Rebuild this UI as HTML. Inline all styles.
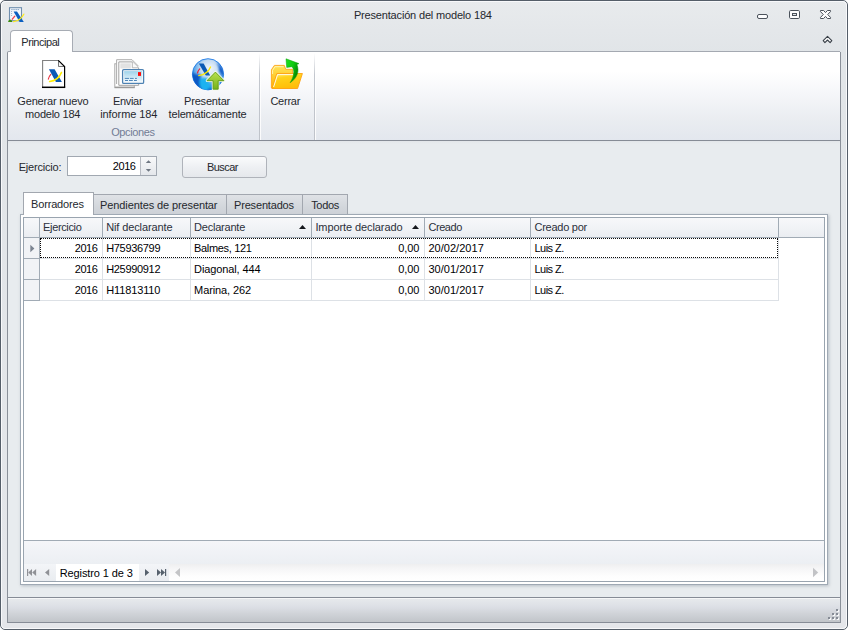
<!DOCTYPE html>
<html>
<head>
<meta charset="utf-8">
<title>Presentación del modelo 184</title>
<style>
html,body{margin:0;padding:0;background:#fff;}
body{width:848px;height:630px;overflow:hidden;position:relative;font-family:"Liberation Sans",sans-serif;font-size:11px;color:#23272e;}
.abs{position:absolute;}
#win{position:absolute;left:0;top:0;width:846px;height:628px;border:1px solid #555e69;border-radius:5px;background:linear-gradient(#e8ebed 0,#e4e7ea 30px,#e1e5e8 51px,#e4e6ea 100%);overflow:hidden;}
#win .hl{position:absolute;left:0;top:0;right:0;bottom:0;border:1px solid #f8f9fb;border-radius:4px;}
.t{position:absolute;white-space:nowrap;line-height:13px;height:13px;transform-origin:0 0;}
.vl{position:absolute;width:1px;}
.hlne{position:absolute;height:1px;}
.tabi{position:absolute;top:194px;height:20px;box-sizing:border-box;border:1px solid #a2a7af;border-left:none;border-bottom:none;background:linear-gradient(#dfe2e6,#d3d7dc 60%,#cdd1d7);}
</style>
</head>
<body>
<div id="win"><div class="hl"></div></div>

<!-- inner frame lines -->
<div class="vl" style="left:7px;top:53px;height:570px;background:#8a9099;"></div>
<div class="vl" style="left:840px;top:52px;height:571px;background:#8a9099;"></div>

<!-- ribbon panel -->
<div class="abs" id="ribbon" style="left:8px;top:52px;width:832px;height:88px;background:linear-gradient(#ffffff 0%,#ffffff 22%,#f5f6f9 48%,#eaedf1 76%,#e3e7ee 100%);"></div>
<div class="hlne" style="left:8px;top:51px;width:832px;background:#a4a9b1;"></div>
<div class="abs" style="left:7px;top:51px;width:2px;height:2px;border-top:1px solid #a4a9b1;border-left:1px solid #8a9099;border-radius:2px 0 0 0;box-sizing:border-box;"></div>
<!-- ribbon tab -->
<div class="abs" id="rtab" style="left:10px;top:30px;width:61px;height:21px;border:1px solid #a7acb4;border-bottom:none;border-radius:4px 4px 0 0;background:#fff;"></div>

<!-- ribbon separators -->
<div class="vl" style="left:259px;top:53px;height:87px;background:linear-gradient(rgba(197,201,208,0),#c3c7ce 25%,#bfc3ca);"></div>
<div class="vl" style="left:260px;top:53px;height:87px;background:linear-gradient(rgba(255,255,255,0),#fff 25%,#fbfbfc);"></div>
<div class="vl" style="left:314px;top:53px;height:87px;background:linear-gradient(rgba(197,201,208,0),#c3c7ce 25%,#bfc3ca);"></div>
<div class="vl" style="left:315px;top:53px;height:87px;background:linear-gradient(rgba(255,255,255,0),#fff 25%,#fbfbfc);"></div>

<!-- content -->
<div class="abs" id="content" style="left:8px;top:140px;width:832px;height:457px;background:linear-gradient(#dfe2e6 0,#e5e9ec 2px,#e8ecef 4px,#e8ecef 100%);"></div>
<div class="hlne" style="left:8px;top:140px;width:832px;background:#868c96;"></div>
<!-- app icon -->
<svg class="abs" style="left:7px;top:6px;" width="18" height="18" viewBox="7 6 18 18">
<rect x="9.5" y="7.7" width="12" height="13" fill="#f4f8fc" stroke="#6f8eae" stroke-width="1.1"/>
<path d="M11.3 9.6 H19.8" stroke="#7a9cc0" stroke-width="1" stroke-dasharray="1.3 0.8"/>
<path d="M11.6 11 V17" stroke="#8aa8c8" stroke-width="0.9" stroke-dasharray="1 1"/>
<path d="M13.6 11.6 H17 L23.8 22 H19.6 Z" fill="#0b5fc0"/>
<path d="M12.3 19.2 L14.8 16.2" stroke="#f0404c" stroke-width="1.3" stroke-linecap="round"/>
<path d="M13.6 21.6 Q20.5 20.6 23.8 14.2" stroke="#ffec1a" stroke-width="1.3" fill="none" stroke-linecap="round"/>
<path d="M8 21.9 Q8.4 19.6 10.2 19.4 Q12 19.6 12.4 21.9 Z" fill="#3c8c10"/>
</svg>

<!-- window buttons -->
<svg class="abs" style="left:755px;top:7px;" width="80" height="15" viewBox="755 7 80 15">
<rect x="757.5" y="14.5" width="10" height="4" rx="1.5" fill="#fdfdfe" stroke="#4b525b" stroke-width="1"/>
<rect x="789.5" y="10.5" width="10" height="8" rx="1.2" fill="#fdfdfe" stroke="#4b525b" stroke-width="1"/>
<rect x="792.5" y="13.5" width="4" height="2" fill="#e4e7eb" stroke="#4b525b" stroke-width="1"/>
<path d="M820.5 10.5 H823.6 L825.5 12.6 L827.4 10.5 H830.5 V11.6 L827.7 14.5 L830.5 17.4 V18.5 H827.4 L825.5 16.4 L823.6 18.5 H820.5 V17.4 L823.3 14.5 L820.5 11.6 Z" fill="#fdfdfe" stroke="#4b525b" stroke-width="1" stroke-linejoin="round"/>
</svg>
<svg class="abs" style="left:820px;top:34px;" width="14" height="11" viewBox="820 34 14 11">
<path d="M827.5 36.3 L831.8 40.6 L830.1 42.6 L827.5 40 L824.9 42.6 L823.2 40.6 Z" fill="#ffffff" stroke="#3a4149" stroke-width="1.1" stroke-linejoin="round"/>
</svg>

<!-- icon 1: generar -->
<svg class="abs" style="left:34px;top:54px;" width="40" height="40" viewBox="0 0 40 40">
<path d="M8.5 6.5 H24.5 L30.5 12.5 V33.2 H8.5 Z" fill="#fff"/>
<path d="M8.6 33.5 V6.5 H24.5" fill="none" stroke="#808080" stroke-width="1.1"/>
<path d="M24.5 6.5 V12.5 H30.5 Z" fill="#f4f4f4" stroke="#555" stroke-width="0.8"/>
<path d="M24.3 6.3 L30.6 12.6 V33.5" fill="none" stroke="#000" stroke-width="1.2"/>
<path d="M8 33.3 H31.2" stroke="#000" stroke-width="1.5"/>
<path d="M14.9 15.2 H20.6 L27.9 27.9 H21.9 Z" fill="#0b5ab5"/>
<path d="M14.3 25.2 Q14.8 22.6 16.8 20.4" stroke="#e8303e" stroke-width="1.1" fill="none" stroke-linecap="round"/>
<path d="M15.6 27.6 Q24.2 26.6 27.5 18.4" stroke="#ffee00" stroke-width="1.5" fill="none" stroke-linecap="round"/>
</svg>

<!-- icon 2: enviar -->
<svg class="abs" style="left:108px;top:54px;" width="40" height="40" viewBox="0 0 40 40">
<defs><linearGradient id="env" x1="0" y1="0" x2="0" y2="1"><stop offset="0" stop-color="#9fd3ea"/><stop offset="1" stop-color="#f2f9fd"/></linearGradient></defs>
<rect x="6.8" y="9.8" width="19.5" height="23.2" fill="#fff" stroke="#a9a9a9" stroke-width="1"/>
<path d="M6.5 33.6 H26.8" stroke="#9a9a9a" stroke-width="1.2"/>
<path d="M8.6 30 V5.7 H24 L30.6 12.3" fill="#fff" stroke="#adadad" stroke-width="1"/>
<path d="M10.8 31.3 V7.9 H24.3 L30.7 14 V31.3 Z" fill="#fff" stroke="#a2a2a2" stroke-width="1"/>
<rect x="12.3" y="9.3" width="10.5" height="5.2" fill="#e2e2e2"/>
<path d="M24.3 8 V13.8 H30.5" fill="#fafafa" stroke="#b0b0b0" stroke-width="0.9"/>
<rect x="14.6" y="15.6" width="21" height="13.8" rx="1.2" fill="#fff" stroke="#4d82b3" stroke-width="1.3"/>
<rect x="16.1" y="17.1" width="18" height="10.8" fill="url(#env)"/>
<rect x="29.6" y="17.7" width="3.8" height="4.6" fill="#b8f0f8"/>
<rect x="30" y="18.1" width="3" height="3.8" fill="#ff0a0a"/>
<path d="M16.8 24.4 H21 M21.9 24.4 H25.7 M27 24.4 H28.9 M17 26.5 H20 M21 26.5 H24.8 M26 26.5 H28.9" stroke="#3d7ab2" stroke-width="0.9"/>
</svg>

<!-- icon 3: presentar -->
<svg class="abs" style="left:188px;top:54px;" width="40" height="40" viewBox="0 0 40 40">
<defs>
<radialGradient id="gl" cx="0.55" cy="0.33" r="0.72"><stop offset="0" stop-color="#f4f8fc"/><stop offset="0.4" stop-color="#c4dbf2"/><stop offset="0.72" stop-color="#4a9fe8"/><stop offset="1" stop-color="#0b62d4"/></radialGradient>
<linearGradient id="ga" x1="0" y1="0" x2="0" y2="1"><stop offset="0" stop-color="#b9e04e"/><stop offset="1" stop-color="#76b21a"/></linearGradient>
<clipPath id="gc"><circle cx="20" cy="20.3" r="15.5"/></clipPath>
<filter id="bl" x="-20%" y="-20%" width="140%" height="140%"><feGaussianBlur stdDeviation="0.9"/></filter>
</defs>
<circle cx="20" cy="20.3" r="15.6" fill="url(#gl)" stroke="#1f7ce6" stroke-width="0.9"/>
<g clip-path="url(#gc)" filter="url(#bl)">
<path d="M3 18 Q8 21.5 13.5 20.5 Q10 27 14 37 L3 37 Z" fill="#0a58c4"/>
<path d="M12 25 Q10 31 15 37 L27 37 Q20 31 20.5 25 Q16 23 12 25 Z" fill="#1cb2f0"/>
<path d="M28 8 Q36 12 36.5 23 Q33 21 31 17 Q31.5 12 28 8 Z" fill="#0e5cc8"/>
<path d="M20 34 Q26 36 32 30 L32 37 L20 37 Z" fill="#0a58c4"/>
</g>
<path d="M10.8 9.5 H15.6 L22.2 21.6 H17.8 Z" fill="#0b5ab5"/>
<path d="M9.5 19 Q10 16.8 11.7 14.9" stroke="#e8283c" stroke-width="1.2" fill="none" stroke-linecap="round"/>
<path d="M10.8 21.6 Q19.5 20.5 22.5 13" stroke="#ffe800" stroke-width="1.3" fill="none" stroke-linecap="round"/>
<path d="M27.4 18.1 L35.9 26.7 H30.2 V35.2 H25.1 V26.7 H19 Z" fill="none" stroke="#f4f9ec" stroke-width="2.6" stroke-linejoin="round" opacity="0.92"/>
<path d="M27.4 18.1 L35.9 26.7 H30.2 V35.2 H25.1 V26.7 H19 Z" fill="url(#ga)" stroke="#5c9c16" stroke-width="0.9" stroke-linejoin="round"/>
</svg>

<!-- icon 4: cerrar -->
<svg class="abs" style="left:266px;top:54px;" width="40" height="40" viewBox="0 0 40 40">
<defs>
<linearGradient id="fb" x1="0" y1="0" x2="0" y2="1"><stop offset="0" stop-color="#ffe45a"/><stop offset="1" stop-color="#ffb300"/></linearGradient>
<linearGradient id="ff" x1="0" y1="0" x2="0.3" y2="1"><stop offset="0" stop-color="#ffee88"/><stop offset="0.35" stop-color="#ffd21a"/><stop offset="1" stop-color="#ffbe0a"/></linearGradient>
<linearGradient id="gr" x1="0" y1="0" x2="1" y2="0.6"><stop offset="0" stop-color="#1fe01f"/><stop offset="0.5" stop-color="#0ecb10"/><stop offset="1" stop-color="#007a00"/></linearGradient>
</defs>
<path d="M5.4 34 V15.8 L8.4 11.4 H18.3 L19.7 15.3 H26.6 V34 Z" fill="url(#fb)" stroke="#ffa41a" stroke-width="0.9" stroke-linejoin="round"/>
<path d="M6.6 20 V16.4 L8.9 12.7 H17.5" fill="none" stroke="#fff6c0" stroke-width="0.9"/>
<path d="M10.8 19.5 H36.4 L31.6 34.5 H6 Z" fill="url(#ff)" stroke="#ffa012" stroke-width="0.9" stroke-linejoin="round"/>
<path d="M7.6 33 L11.6 20.6 H27" fill="none" stroke="#fffbe6" stroke-width="1"/>
<path d="M20 4.8 L33 9.6 L30.9 10.6 C33.6 17 31.4 24.2 24.1 28.7 C28 22.6 29 16.4 26 12.7 L20.7 13.4 Z" fill="url(#gr)" stroke="#0aa00a" stroke-width="0.5" stroke-linejoin="round"/>
</svg>


<!-- search row -->
<div class="abs" id="spin" style="left:67px;top:156px;width:88px;height:18px;border:1px solid #a1a8b1;background:#fff;"></div>
<div class="abs" style="left:140px;top:157px;width:16px;height:18px;background:linear-gradient(#f8f9fa,#e4e7eb);border-left:1px solid #b7bbc2;box-sizing:border-box;"></div>
<svg class="abs" style="left:145px;top:160px;" width="8" height="12" viewBox="0 0 8 12"><path d="M0.8 3 L3.5 0.2 L6.2 3 Z" fill="#6f7782"/><path d="M0.8 9 L3.5 11.8 L6.2 9 Z" fill="#6f7782"/></svg>
<div class="abs" id="btn" style="left:182px;top:156px;width:83px;height:20px;border:1px solid #afb3ba;border-radius:3px;background:linear-gradient(#fafbfc,#eef0f3 50%,#e5e8ec);"></div>

<!-- tab page frame -->
<div class="abs" style="left:20px;top:214px;width:806px;height:369px;border:1px solid #9fa9b4;background:#fff;box-shadow:1px 1px 3px rgba(110,120,135,0.40);"></div>

<!-- tabs -->
<div class="tabi" style="left:94px;width:133px;"></div>
<div class="tabi" style="left:227px;width:76px;"></div>
<div class="tabi" style="left:303px;width:45px;"></div>
<div class="abs" style="left:23px;top:192px;width:71px;height:23px;border:1px solid #a2a7af;border-bottom:none;background:#fff;box-sizing:border-box;"></div>

<!-- grid -->
<div class="abs" id="grid" style="left:23px;top:217px;width:800px;height:363px;border:1px solid #99a4af;background:#fff;"></div>
<div class="abs" style="left:24px;top:218px;width:800px;height:19px;background:linear-gradient(#f7f8fa,#f1f3f6 50%,#eaedf1);"></div>
<div class="hlne" style="left:24px;top:237px;width:800px;background:#a1abb5;"></div>
<div class="vl" style="left:39px;top:218px;height:19px;background:#a1abb5;"></div>
<div class="vl" style="left:102px;top:218px;height:19px;background:#a1abb5;"></div>
<div class="vl" style="left:190px;top:218px;height:19px;background:#a1abb5;"></div>
<div class="vl" style="left:311px;top:218px;height:19px;background:#a1abb5;"></div>
<div class="vl" style="left:424px;top:218px;height:19px;background:#a1abb5;"></div>
<div class="vl" style="left:530px;top:218px;height:19px;background:#a1abb5;"></div>
<div class="vl" style="left:778px;top:218px;height:19px;background:#a1abb5;"></div>
<svg class="abs" style="left:299px;top:225px;" width="7" height="4" viewBox="0 0 7 4"><path d="M0 4 L3.5 0 L7 4 Z" fill="#14171c"/></svg>
<svg class="abs" style="left:412px;top:225px;" width="7" height="4" viewBox="0 0 7 4"><path d="M0 4 L3.5 0 L7 4 Z" fill="#14171c"/></svg>
<div class="abs" style="left:24px;top:238px;width:15px;height:63px;background:#f1f3f6;"></div>
<div class="vl" style="left:39px;top:238px;height:63px;background:#a1abb5;"></div>
<div class="hlne" style="left:24px;top:258px;width:16px;background:#a1abb5;"></div>
<div class="hlne" style="left:40px;top:258px;width:739px;background:#dde1e6;"></div>
<div class="hlne" style="left:24px;top:279px;width:16px;background:#a1abb5;"></div>
<div class="hlne" style="left:40px;top:279px;width:739px;background:#dde1e6;"></div>
<div class="hlne" style="left:24px;top:300px;width:16px;background:#a1abb5;"></div>
<div class="hlne" style="left:40px;top:300px;width:739px;background:#dde1e6;"></div>
<div class="vl" style="left:102px;top:238px;height:63px;background:#dde1e6;"></div>
<div class="vl" style="left:190px;top:238px;height:63px;background:#dde1e6;"></div>
<div class="vl" style="left:311px;top:238px;height:63px;background:#dde1e6;"></div>
<div class="vl" style="left:424px;top:238px;height:63px;background:#dde1e6;"></div>
<div class="vl" style="left:530px;top:238px;height:63px;background:#dde1e6;"></div>
<div class="vl" style="left:778px;top:238px;height:63px;background:#dde1e6;"></div>
<svg class="abs" style="left:30px;top:244px;" width="5" height="9" viewBox="0 0 5 9"><path d="M0.3 0.8 L4.4 4.5 L0.3 8.2 Z" fill="#7b8491"/></svg>
<div class="abs" style="left:40px;top:238px;width:736px;height:18px;border:1px dotted #0a0a0a;"></div>

<!-- footer -->
<div class="hlne" style="left:24px;top:540px;width:800px;background:#a1abb5;"></div>
<div class="abs" style="left:24px;top:541px;width:800px;height:23px;background:linear-gradient(#f5f6f9,#f0f2f6 50%,#eceff3);"></div>
<div class="abs" style="left:24px;top:564px;width:800px;height:17px;background:linear-gradient(#efeff0,#f7f7f8 35%,#fdfdfd 70%,#ffffff);"></div>
<div class="abs" style="left:24px;top:564px;width:145px;height:17px;background:linear-gradient(#f3f5f8,#e9ecf0);"></div>
<div class="abs" style="left:56px;top:564px;width:83px;height:17px;background:#fff;"></div>
<!-- nav buttons -->
<svg class="abs" style="left:24px;top:564px;" width="160" height="17" viewBox="24 564 160 17">
<g fill="#8f9196">
<rect x="27" y="569" width="1.2" height="7"/>
<path d="M32 569 V576 L28.2 572.5 Z"/><path d="M36.1 569 V576 L32.2 572.5 Z"/>
<path d="M49.2 569 V576 L45 572.5 Z"/>
</g>
<g fill="#56616d">
<path d="M145 569 V576 L149.2 572.5 Z"/>
<path d="M157 569 V576 L161 572.5 Z"/><path d="M161 569 V576 L165 572.5 Z"/>
<rect x="165" y="569" width="1.2" height="7"/>
</g>
<path d="M180 568 V577 L175 572.5 Z" fill="#c4c5c7"/>
</svg>
<svg class="abs" style="left:810px;top:566px;" width="10" height="12" viewBox="0 0 10 12"><path d="M3 1.8 V11.2 L8.2 6.5 Z" fill="#c2c3c6"/></svg>

<!-- status bar -->
<div class="abs" style="left:8px;top:597px;width:832px;height:26px;box-sizing:border-box;border-top:1px solid #868c96;border-bottom:1px solid #868c96;background:linear-gradient(#f6f7f8 0,#f6f7f8 1px,#e6e9ec 1px,#dcdfe5 38%,#d0d3d8 65%,#c1c5ca 100%);"></div>
<svg class="abs" style="left:827px;top:608px;" width="13" height="13" viewBox="827 608 13 13">
<g fill="#f8f9fa"><rect x="837" y="610" width="2" height="2"/><rect x="833" y="614" width="2" height="2"/><rect x="837" y="614" width="2" height="2"/><rect x="829" y="618" width="2" height="2"/><rect x="833" y="618" width="2" height="2"/><rect x="837" y="618" width="2" height="2"/></g>
<g fill="#858b95"><rect x="836" y="609" width="2" height="2"/><rect x="832" y="613" width="2" height="2"/><rect x="836" y="613" width="2" height="2"/><rect x="828" y="617" width="2" height="2"/><rect x="832" y="617" width="2" height="2"/><rect x="836" y="617" width="2" height="2"/></g>
</svg>

<div class="t" style="left:353.9px;top:9px;letter-spacing:-0.17px;color:#25282e;">Presentación del modelo 184</div>
<div class="t" style="left:21.3px;top:36px;letter-spacing:-0.46px;color:#25282e;">Principal</div>
<div class="t" style="left:17.3px;top:95px;letter-spacing:-0.17px;color:#25282e;">Generar nuevo</div>
<div class="t" style="left:25.1px;top:108px;letter-spacing:-0.24px;color:#25282e;">modelo 184</div>
<div class="t" style="left:112.9px;top:95px;letter-spacing:-0.30px;color:#25282e;">Enviar</div>
<div class="t" style="left:100.2px;top:108px;letter-spacing:-0.08px;color:#25282e;">informe 184</div>
<div class="t" style="left:184.0px;top:95px;letter-spacing:-0.18px;color:#25282e;">Presentar</div>
<div class="t" style="left:168.6px;top:108px;letter-spacing:-0.19px;color:#25282e;">telemáticamente</div>
<div class="t" style="left:270.4px;top:95px;letter-spacing:-0.23px;color:#25282e;">Cerrar</div>
<div class="t" style="left:111.2px;top:126px;letter-spacing:-0.37px;color:#727c95;">Opciones</div>
<div class="t" style="left:18.7px;top:161px;letter-spacing:-0.19px;color:#25282e;">Ejercicio:</div>
<div class="t" style="left:112.7px;top:160px;letter-spacing:-0.39px;color:#000004;">2016</div>
<div class="t" style="left:206.9px;top:161px;letter-spacing:-0.55px;color:#25282e;">Buscar</div>
<div class="t" style="left:31.1px;top:198px;letter-spacing:-0.18px;color:#25282e;">Borradores</div>
<div class="t" style="left:100.1px;top:199px;letter-spacing:-0.11px;color:#25282e;">Pendientes de presentar</div>
<div class="t" style="left:234.0px;top:199px;letter-spacing:-0.17px;color:#25282e;">Presentados</div>
<div class="t" style="left:311.2px;top:199px;letter-spacing:-0.34px;color:#25282e;">Todos</div>
<div class="t" style="left:43.1px;top:221px;letter-spacing:-0.36px;color:#2b303b;">Ejercicio</div>
<div class="t" style="left:106.2px;top:221px;letter-spacing:-0.12px;color:#2b303b;">Nif declarante</div>
<div class="t" style="left:194.1px;top:221px;letter-spacing:-0.22px;color:#2b303b;">Declarante</div>
<div class="t" style="left:315.4px;top:221px;letter-spacing:-0.09px;color:#2b303b;">Importe declarado</div>
<div class="t" style="left:428.4px;top:221px;letter-spacing:-0.42px;color:#2b303b;">Creado</div>
<div class="t" style="left:534.5px;top:221px;letter-spacing:-0.26px;color:#2b303b;">Creado por</div>
<div class="t" style="left:59.7px;top:567px;letter-spacing:-0.10px;color:#000004;">Registro 1 de 3</div>
<div class="t" style="left:74.7px;top:242px;letter-spacing:-0.43px;color:#000004;">2016</div>
<div class="t" style="left:106.2px;top:242px;letter-spacing:-0.32px;color:#000004;">H75936799</div>
<div class="t" style="left:194.1px;top:242px;letter-spacing:-0.34px;color:#000004;">Balmes, 121</div>
<div class="t" style="left:398.3px;top:242px;letter-spacing:-0.11px;color:#000004;">0,00</div>
<div class="t" style="left:428.4px;top:242px;letter-spacing:0.04px;color:#000004;">20/02/2017</div>
<div class="t" style="left:534.5px;top:242px;letter-spacing:-0.54px;color:#000004;">Luis Z.</div>
<div class="t" style="left:74.7px;top:263px;letter-spacing:-0.43px;color:#000004;">2016</div>
<div class="t" style="left:106.2px;top:263px;letter-spacing:-0.32px;color:#000004;">H25990912</div>
<div class="t" style="left:194.1px;top:263px;letter-spacing:-0.12px;color:#000004;">Diagonal, 444</div>
<div class="t" style="left:398.3px;top:263px;letter-spacing:-0.11px;color:#000004;">0,00</div>
<div class="t" style="left:428.4px;top:263px;letter-spacing:0.04px;color:#000004;">30/01/2017</div>
<div class="t" style="left:534.5px;top:263px;letter-spacing:-0.54px;color:#000004;">Luis Z.</div>
<div class="t" style="left:74.7px;top:284px;letter-spacing:-0.43px;color:#000004;">2016</div>
<div class="t" style="left:106.2px;top:284px;letter-spacing:-0.12px;color:#000004;">H11813110</div>
<div class="t" style="left:194.1px;top:284px;letter-spacing:-0.10px;color:#000004;">Marina, 262</div>
<div class="t" style="left:398.3px;top:284px;letter-spacing:-0.11px;color:#000004;">0,00</div>
<div class="t" style="left:428.4px;top:284px;letter-spacing:0.04px;color:#000004;">30/01/2017</div>
<div class="t" style="left:534.5px;top:284px;letter-spacing:-0.54px;color:#000004;">Luis Z.</div>
</body>
</html>
